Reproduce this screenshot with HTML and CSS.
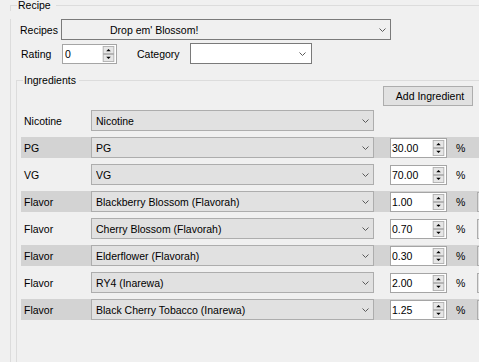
FILE: index.html
```html
<!DOCTYPE html>
<html>
<head>
<meta charset="utf-8">
<link rel="stylesheet" href="styles.css">
</head>
<body>
<svg class="defs" width="0" height="0">
  <defs>
    <symbol id="chev" viewBox="0 0 7 4"><polyline points="0.5,0.5 3.5,3.5 6.5,0.5" fill="none" stroke="#5a5a5a" stroke-width="1"/></symbol>
    <symbol id="spinbtn" viewBox="0 0 13 18">
      <rect x="0.5" y="0.5" width="12" height="8" fill="#e6e6e6" stroke="#adadad"/>
      <rect x="0.5" y="9.5" width="12" height="8" fill="#e6e6e6" stroke="#adadad"/>
      <polygon points="4,6 9,6 6.5,3.5" fill="#000"/>
      <polygon points="4,12 9,12 6.5,14.5" fill="#000"/>
    </symbol>
  </defs>
</svg>
<div class="group outer">
  <div class="gtitle"><span>Recipe</span></div>
  <div class="gbody outer-body">
    <div class="line recipes-line">
      <span class="lbl lbl-recipes">Recipes</span>
      <div class="combo combo-recipe"><span class="ctext">Drop em' Blossom!</span><svg class="chev"><use href="#chev"/></svg></div>
    </div>
    <div class="line rating-line">
      <span class="lbl lbl-rating">Rating</span>
      <div class="spin spin-rating"><span class="stext">0</span><svg class="sbtn"><use href="#spinbtn"/></svg></div>
      <span class="lbl lbl-cat">Category</span>
      <div class="combo combo-cat"><span class="ctext"></span><svg class="chev"><use href="#chev"/></svg></div>
    </div>
    <div class="group inner">
      <div class="gtitle"><span>Ingredients</span></div>
      <div class="gbody inner-body">
        <button class="add">Add Ingredient</button>
        <div class="rows">
          <div class="row">
            <span class="lbl">Nicotine</span>
            <div class="combo"><span class="ctext">Nicotine</span><svg class="chev"><use href="#chev"/></svg></div>
          </div>
          <div class="row band">
            <span class="lbl">PG</span>
            <div class="combo"><span class="ctext">PG</span><svg class="chev"><use href="#chev"/></svg></div>
            <div class="spin"><span class="stext">30.00</span><svg class="sbtn"><use href="#spinbtn"/></svg></div>
            <span class="pct">%</span>
          </div>
          <div class="row">
            <span class="lbl">VG</span>
            <div class="combo"><span class="ctext">VG</span><svg class="chev"><use href="#chev"/></svg></div>
            <div class="spin"><span class="stext">70.00</span><svg class="sbtn"><use href="#spinbtn"/></svg></div>
            <span class="pct">%</span>
          </div>
          <div class="row band">
            <span class="lbl">Flavor</span>
            <div class="combo"><span class="ctext">Blackberry Blossom (Flavorah)</span><svg class="chev"><use href="#chev"/></svg></div>
            <div class="spin"><span class="stext">1.00</span><svg class="sbtn"><use href="#spinbtn"/></svg></div>
            <span class="pct">%</span>
            <span class="rm"></span>
          </div>
          <div class="row">
            <span class="lbl">Flavor</span>
            <div class="combo"><span class="ctext">Cherry Blossom (Flavorah)</span><svg class="chev"><use href="#chev"/></svg></div>
            <div class="spin"><span class="stext">0.70</span><svg class="sbtn"><use href="#spinbtn"/></svg></div>
            <span class="pct">%</span>
            <span class="rm"></span>
          </div>
          <div class="row band">
            <span class="lbl">Flavor</span>
            <div class="combo"><span class="ctext">Elderflower (Flavorah)</span><svg class="chev"><use href="#chev"/></svg></div>
            <div class="spin"><span class="stext">0.30</span><svg class="sbtn"><use href="#spinbtn"/></svg></div>
            <span class="pct">%</span>
            <span class="rm"></span>
          </div>
          <div class="row">
            <span class="lbl">Flavor</span>
            <div class="combo"><span class="ctext">RY4 (Inarewa)</span><svg class="chev"><use href="#chev"/></svg></div>
            <div class="spin"><span class="stext">2.00</span><svg class="sbtn"><use href="#spinbtn"/></svg></div>
            <span class="pct">%</span>
            <span class="rm"></span>
          </div>
          <div class="row band">
            <span class="lbl">Flavor</span>
            <div class="combo"><span class="ctext">Black Cherry Tobacco (Inarewa)</span><svg class="chev"><use href="#chev"/></svg></div>
            <div class="spin"><span class="stext">1.25</span><svg class="sbtn"><use href="#spinbtn"/></svg></div>
            <span class="pct">%</span>
            <span class="rm"></span>
          </div>
        </div>
      </div>
    </div>
  </div>
</div>
</body>
</html>
```
FILE: styles.css
```css
html, body {
  margin: 0;
  height: 100%;
  overflow: hidden;
  background: #f0f0f0;
}
body {
  font-family: "Liberation Sans", Arial, sans-serif;
  font-size: 10.5px;
  color: #000;
  width: 479px;
}
.defs { position: absolute; width: 0; height: 0; }

.gtitle {
  display: flex;
  height: 11px;
  line-height: 11px;
}
.gtitle::before {
  content: "";
  box-sizing: border-box;
  width: 7px;
  height: 6px;
  align-self: flex-end;
  border-top: 1px solid #dcdcdc;
  border-left: 1px solid #dcdcdc;
}
.gtitle::after {
  content: "";
  flex: 1;
  align-self: flex-start;
  margin-top: 5px;
  border-top: 1px solid #dcdcdc;
}
.gtitle span {
  padding: 0 5px 0 1px;
  white-space: nowrap;
}
.gbody { border-left: 1px solid #dcdcdc; }

.outer { margin-left: 10px; }
.outer-body { min-height: 351px; }
.inner { margin: 11px 0 0 5px; }
.inner .gtitle span { padding-right: 3px; }
.inner-body { min-height: 276px; }

.line {
  display: flex;
  align-items: center;
  height: 21px;
}
.recipes-line { margin-top: 8px; }
.rating-line { margin-top: 3px; }
.lbl { flex: none; white-space: nowrap; }
.lbl-recipes { margin-left: 9px; width: 41px; }
.lbl-rating { margin-left: 10px; width: 41px; }
.lbl-cat { margin-left: 20px; width: 53px; }

.combo {
  flex: none;
  box-sizing: border-box;
  height: 21px;
  display: flex;
  align-items: center;
  border: 1px solid #7a7a7a;
  padding-left: 4px;
}
.combo .ctext { flex: 1; white-space: nowrap; overflow: hidden; }
.chev { flex: none; width: 7px; height: 4px; margin-right: 4px; }
.combo-recipe { width: 330px; background: #f0f0f0; padding-left: 48px; }
.combo-cat { width: 122px; background: #fff; margin-right: 0; }
.combo-cat .chev { margin-right: 5px; }

.spin {
  flex: none;
  box-sizing: border-box;
  height: 20px;
  align-self: flex-start;
  margin-top: 1px;
  display: flex;
  align-items: center;
  border: 1px solid #a5a5a5;
  background: #fff;
  padding-left: 1px;
}
.stext { flex: 1; white-space: nowrap; }
.sbtn { flex: none; width: 13px; height: 16px; margin-right: 1px; }
.spin-rating { width: 55px; padding-left: 2px; }

.add {
  display: block;
  margin: 0 0 0 366px;
  width: 90px;
  height: 20px;
  box-sizing: border-box;
  border: 1px solid #adadad;
  background: #e1e1e1;
  font: inherit;
  color: #000;
  padding: 0 0 0 4px;
}
.rows { margin-top: 4px; }
.row {
  display: flex;
  align-items: center;
  height: 21px;
  width: 470px;
  margin: 0 0 6px 4px;
}
.row.band { background: #d3d3d3; }
.row .lbl { width: 70px; padding-left: 3px; box-sizing: border-box; }
.row .combo { width: 283px; border-color: #adadad; background: #e1e1e1; }
.row .spin { width: 57px; margin-left: 16px; }
.pct { flex: none; width: 21px; margin-left: 9px; }
.rm {
  flex: none;
  width: 20px;
  height: 20px;
  box-sizing: border-box;
  align-self: flex-start;
  margin-top: 1px;
  border: 1px solid #adadad;
  background: #e1e1e1;
}
```
